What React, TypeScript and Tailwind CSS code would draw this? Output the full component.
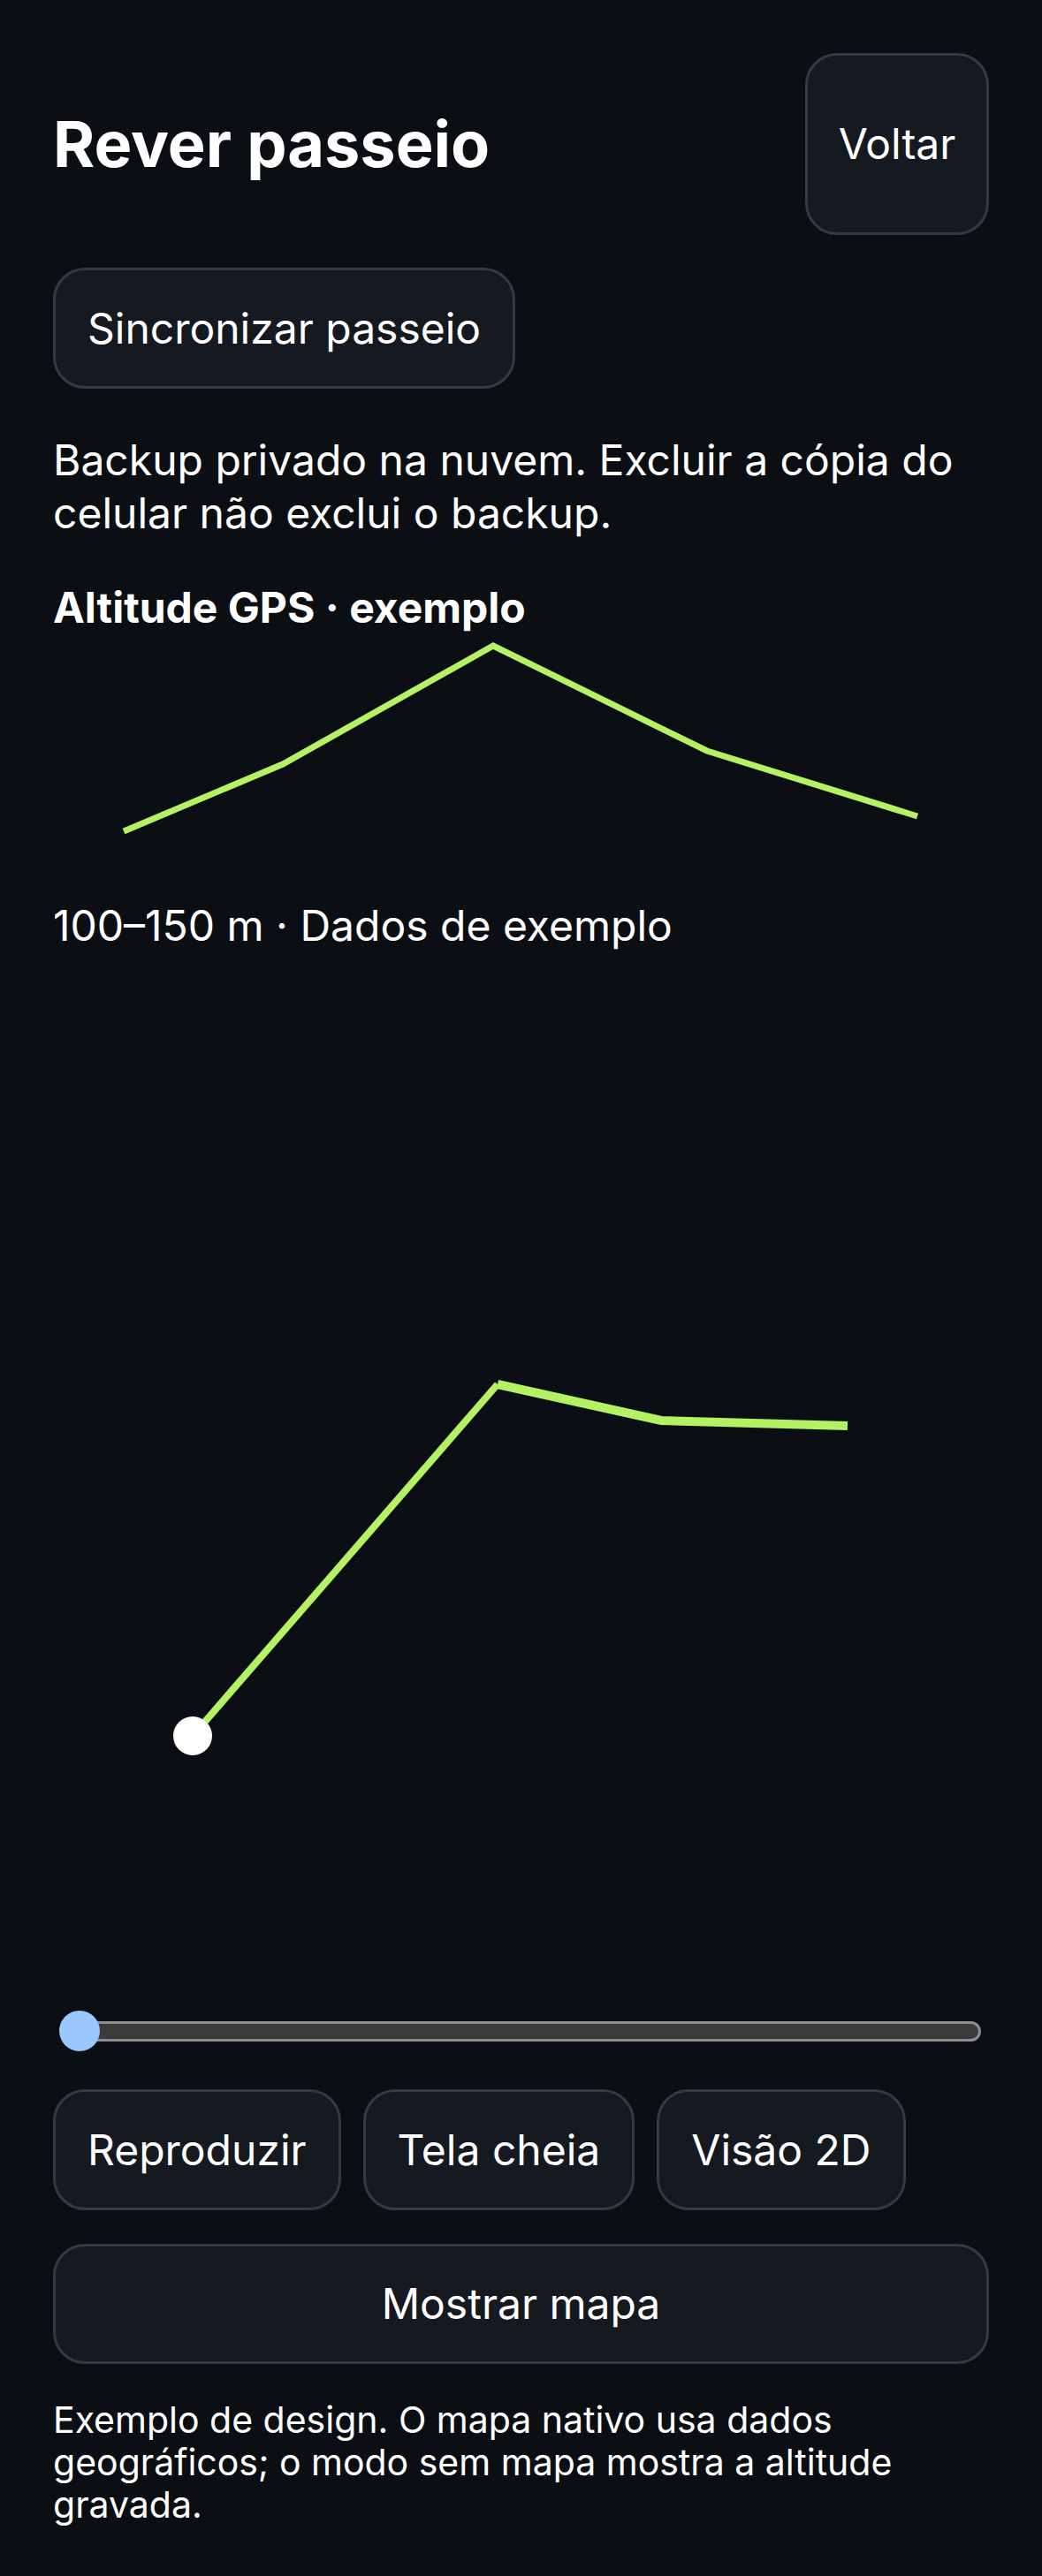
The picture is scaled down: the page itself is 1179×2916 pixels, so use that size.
import React from 'react';

const btn =
  'rounded-[36px] border-[3px] border-[#323a45] bg-[#151a21] text-white text-[48px] leading-[60px]';

const App: React.FC = () => {
  return (
    <div className="min-h-[2916px] bg-[#0b0f14] px-[60px] pt-[60px] text-white font-['Inter','Noto_Sans',sans-serif]">
      {/* header */}
      <div className="flex items-center justify-between">
        <h1 className="text-[72px] font-bold leading-[80px]">Rever passeio</h1>
        <button className={`${btn} h-[206px] w-[208px]`}>Voltar</button>
      </div>

      <button className={`${btn} mt-[37px] h-[137px] px-[36px]`}>Sincronizar passeio</button>

      <p className="mt-[51px] text-[48px] leading-[60px]">
        Backup privado na nuvem. Excluir a cópia do celular não exclui o backup.
      </p>

      <h2 className="mt-[47px] text-[48px] font-bold leading-[60px]">Altitude GPS · exemplo</h2>

      {/* altitude chart */}
      <svg className="block h-[300px] w-full" viewBox="0 0 1059 300">
        <polyline
          points="80,223 260,147 498,13 740,132 978,206"
          fill="none"
          stroke="#b4f163"
          strokeWidth="7"
          strokeLinejoin="miter"
        />
      </svg>

      <p className="text-[48px] leading-[60px]">100–150 m · Dados de exemplo</p>

      {/* 3D track view */}
      <svg className="block h-[1190px] w-full" viewBox="0 0 1059 1190">
        <line x1="158" y1="887" x2="503" y2="489" stroke="#b4f163" strokeWidth="8" />
        <polyline
          points="503,489 688,530 899,536"
          fill="none"
          stroke="#b4f163"
          strokeWidth="10"
          strokeLinejoin="miter"
        />
        <circle cx="158" cy="887" r="22" fill="#ffffff" />
      </svg>

      {/* scrubber */}
      <div className="relative mt-[8px] flex h-[46px] items-center">
        <div className="mx-[9px] h-[23px] flex-1 rounded-full border-[3px] border-[#8d8d8d] bg-[#3b3b3b]" />
        <div className="absolute left-[7px] top-0 h-[46px] w-[46px] rounded-full bg-[#99c8ff]" />
      </div>

      <div className="mt-[43px] flex gap-[25px]">
        <button className={`${btn} h-[137px] px-[36px]`}>Reproduzir</button>
        <button className={`${btn} h-[137px] px-[36px]`}>Tela cheia</button>
        <button className={`${btn} h-[137px] px-[36px]`}>Visão 2D</button>
      </div>

      <button className={`${btn} mt-[38px] h-[136px] w-full`}>Mostrar mapa</button>

      <p className="mt-[39px] text-[41px] leading-[48px]">
        Exemplo de design. O mapa nativo usa dados geográficos; o modo sem mapa mostra a altitude gravada.
      </p>
    </div>
  );
};

export default App;
